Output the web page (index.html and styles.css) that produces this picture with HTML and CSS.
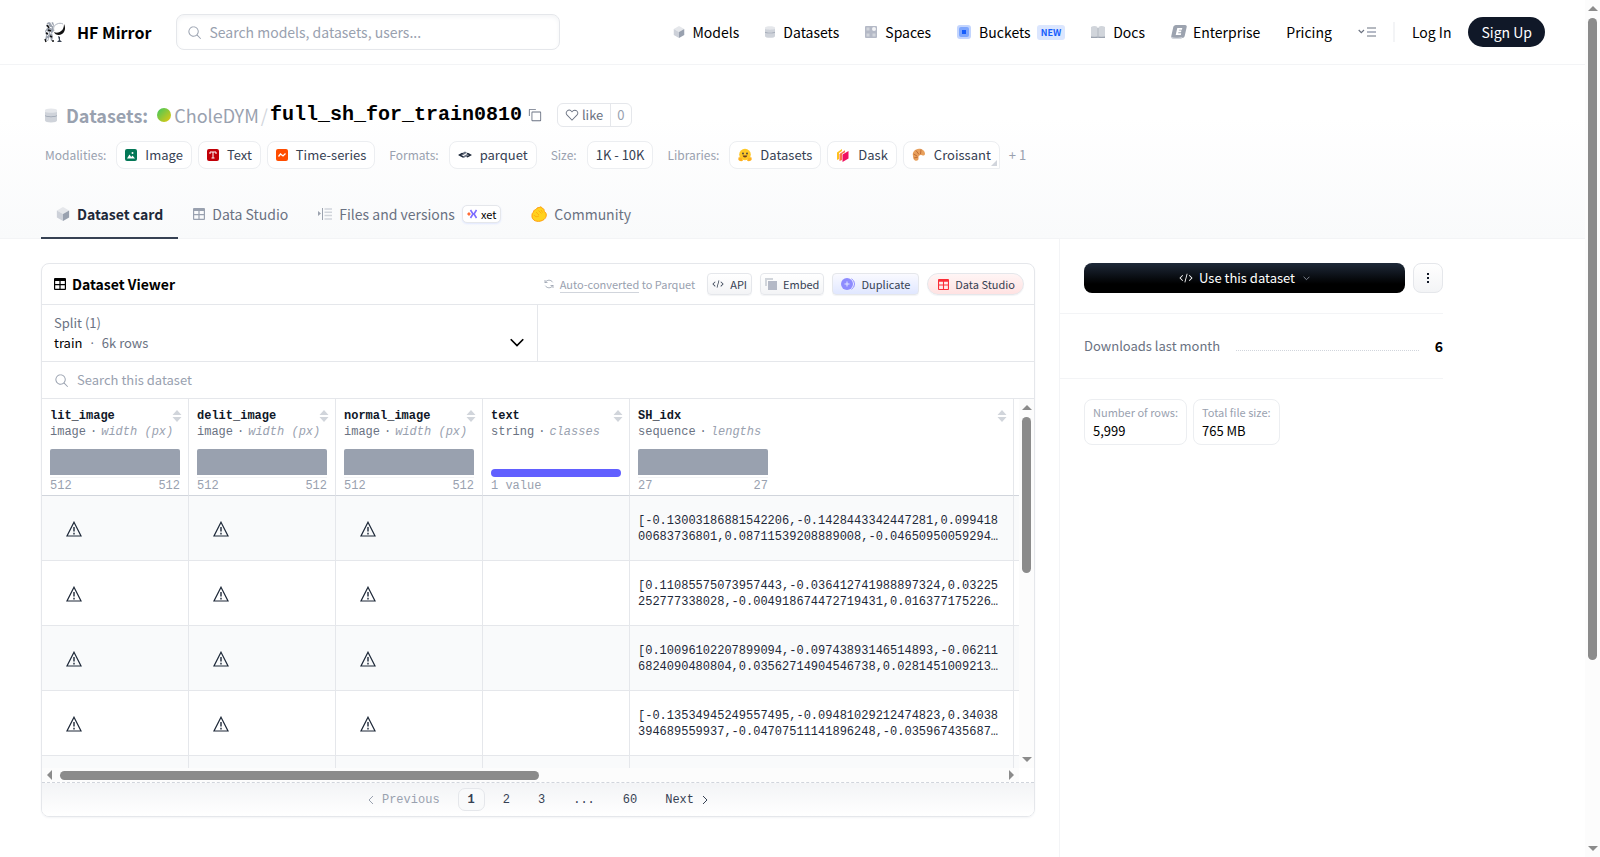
FILE: index.html
```html
<!DOCTYPE html>
<html lang="en">
<head>
    <meta charset="utf-8">
    <title>CholeDYM/full_sh_for_train0810 - Datasets at HF Mirror</title>
    <meta name="viewport" content="width=device-width, initial-scale=1">
    <link rel="stylesheet" href="styles.css">
</head>
<body>
    <!-- shared icons -->
    <svg class="sprite" aria-hidden="true">
        <symbol id="i-search" viewBox="0 0 32 32"><path d="M30 28.590L22.450 21A11 11 0 1 0 21 22.450L28.590 30zM5 14a9 9 0 1 1 9 9a9 9 0 0 1-9-9z" fill="currentColor"/></symbol>
        <symbol id="i-cube" viewBox="0 0 24 24"><path d="M12 0l10.500 6L12 12 1.500 6z" fill="#e5e7eb"/><path d="M1.500 6L12 12v12L1.500 18z" fill="#cdd1d9"/><path d="M22.500 6L12 12v12l10.500-6z" fill="#99a1af"/></symbol>
        <symbol id="i-db" viewBox="0 0 24 28"><path d="M0 5v19c0 2 5 4 12 4s12-2 12-4V5z" fill="#cfd3da"/><path d="M0 3c0-1.500 5-3 12-3s12 1.500 12 3v4c-2 2-22 2-24 0z" fill="#e5e7eb"/><path d="M0 13.500c4 3 20 3 24 0v1.500c-4 3-20 3-24 0z" fill="#99a1af"/></symbol>
        <symbol id="i-code" viewBox="0 0 32 32"><path d="M31 16l-7 7-1.410-1.410L28.170 16l-5.580-5.590L24 9zM1 16l7-7 1.410 1.410L3.830 16l5.580 5.590L8 23zM12.420 25.484L17.640 6l1.932.517L14.352 26z" fill="currentColor"/></symbol>
        <symbol id="i-table" viewBox="0 0 12 12"><path fill-rule="evenodd" d="M1 0h10a1 1 0 0 1 1 1v10a1 1 0 0 1-1 1H1a1 1 0 0 1-1-1V1a1 1 0 0 1 1-1zM1.200 3v3h4.200V3zm5.400 0v3h4.200V3zM1.200 7.200v3.600h4.200V7.200zm5.400 0v3.600h4.200V7.200z" fill="currentColor"/></symbol>
        <symbol id="i-down" viewBox="0 0 12 8"><path d="M1 1l5 5 5-5" fill="none" stroke="currentColor" stroke-width="1.400"/></symbol>
        <symbol id="i-sort" viewBox="0 0 10 12"><path d="M5 0l4.500 5h-9zM5 12l4.500-5h-9z" fill="#d1d5db"/></symbol>
        <symbol id="i-warn" viewBox="0 0 16 16"><path d="M8 1.200L15 15H1z" fill="none" stroke="currentColor" stroke-width="1.200"/><path d="M8 6v4.500M8 11.800v1.600" stroke="currentColor" stroke-width="1.400"/></symbol>
    </svg>

    <div class="window">
        <div class="page">
            <header class="topbar">
                <a class="brand" href="#">
                    <svg width="22" height="22" viewBox="0 0 22 22" aria-hidden="true">
                        <path d="M5 1l2 1 2-1 1 3-1 3 1 3-2 2 1 4-1 4H7l-1-5-2 5H1l1-6-1-4 2-3-1-3 1-2z" fill="#9ca3af"/>
                        <path d="M2 3l3 1M1 7l4-1 3 1M2 10l3 2-2 3M6 9l1 4M4 17l-2 4M7 2l2 3" stroke="#fff" stroke-width="1" fill="none"/>
                        <path d="M3 4l2 3M2 12l2 1M6 15l2 1M1 18l1 3M8 20h2M4 9l3 1" stroke="#111" stroke-width="1.400" fill="none"/>
                        <path d="M10 11c2 1 5 1 7-1 2-1 3-4 3-7 2 4 1 8-2 10-3 2-7 1-8-2z" fill="#111"/>
                        <path d="M10 10c-1-3 0-6 3-7 2-1 4-1 6 0" fill="none" stroke="#9ca3af" stroke-width=".8"/>
                        <path d="M14 15l2 1v3l2 2h-5l2-2z" fill="#374151"/>
                    </svg>
                    HF Mirror
                </a>
                <form class="site-search">
                    <svg class="ico-15"><use href="#i-search"/></svg>
                    <input type="search" aria-label="Search models, datasets, users" placeholder="Search models, datasets, users...">
                </form>
                <nav class="nav">
                    <a href="#"><svg class="ico-12"><use href="#i-cube"/></svg>Models</a>
                    <a href="#"><svg class="ico-db"><use href="#i-db"/></svg>Datasets</a>
                    <a href="#">
                        <svg width="12" height="12" viewBox="0 0 12 12"><rect width="12" height="12" rx="1" fill="#b4b9c6"/><path d="M1.500 1.500h3v3h-3zM1.500 7.500h3v3h-3zM7.500 7.500h3v3h-3z" fill="#d1d5db"/><circle cx="9" cy="3" r="2" fill="#f3f4f6"/></svg>
                        Spaces
                    </a>
                    <a href="#">
                        <svg width="14" height="14" viewBox="0 0 14 14"><rect width="14" height="14" rx="3" fill="#c3d5fe"/><rect x="2" y="2" width="10" height="10" rx="2" fill="#7ea6fd"/><rect x="5" y="5" width="4" height="4" fill="#155dfc"/></svg>
                        Buckets <span class="new">NEW</span>
                    </a>
                    <a href="#">
                        <svg width="14" height="12" viewBox="0 0 14 12"><path d="M0 1c2-1.300 5-1.300 6.500 0v10C5 10 2 10 0 11zM7.500 1C9 -.3 12-.3 14 1v10c-2-1-5-1-6.500 0z" fill="#d1d5db"/><path d="M0 10.500h6l1 1 1-1h6V12H0zM6.500 2h1v9h-1z" fill="#9ca3af"/></svg>
                        Docs
                    </a>
                    <a href="#" class="enterprise">
                        <svg width="16" height="14" viewBox="0 0 16 14"><path d="M5 0h9c1.500 0 2 1 1.700 2l-2 9c-.3 1-1.200 2-2.700 2H2C.5 13 0 12 .3 11l2-9C2.600 1 3.500 0 5 0z" fill="#9ca3af"/><path d="M.4 12c3 1.300 8 .8 11 0l-1 2H2C1 14 .4 13 .4 12z" fill="#d1d5db"/><path d="M6.300 3h5l-.4 1.700H8l-.2.900h2.600l-.4 1.600H7.400L7.200 8.300h3L9.800 10H4.700z" fill="#fff"/></svg>
                        Enterprise
                    </a>
                    <a href="#">Pricing</a>
                    <button class="more-nav" aria-label="More">
                        <svg width="18" height="10" viewBox="0 0 18 10"><path d="M.7 3l2.600 2.600L6 3" fill="none" stroke="#6b7280" stroke-width="1.200"/><path d="M9 1h9M9 9h9" stroke="#6b7280"/><path d="M9 5h9" stroke="#b4b9c6" stroke-width="2"/></svg>
                    </button>
                </nav>
                <div class="account">
                    <a href="#">Log In</a>
                    <a href="#" class="signup">Sign Up</a>
                </div>
            </header>

            <section class="hero">
                <h1 class="repo">
                    <svg class="ico-repo"><use href="#i-db"/></svg>
                    <a href="#" class="kind">Datasets:</a>
                    <span class="avatar"></span>
                    <a href="#" class="owner">CholeDYM</a><span class="slash">/</span><a href="#" class="name">full_sh_for_train0810</a>
                    <button class="copy" aria-label="Copy dataset name">
                        <svg width="14" height="14" viewBox="0 0 32 32"><path d="M28 10v18H10V10h18m0-2H10a2 2 0 0 0-2 2v18a2 2 0 0 0 2 2h18a2 2 0 0 0 2-2V10a2 2 0 0 0-2-2zM4 18H2V4a2 2 0 0 1 2-2h14v2H4z" fill="currentColor"/></svg>
                    </button>
                    <span class="likes">
                        <button><svg width="14" height="14" viewBox="0 0 32 32"><path d="M22.450 6a5.470 5.470 0 0 1 3.910 1.640 5.700 5.700 0 0 1 0 8L16 26.130 5.640 15.640a5.700 5.700 0 0 1 0-8 5.480 5.480 0 0 1 7.820 0L16 10.240l2.530-2.580A5.440 5.440 0 0 1 22.450 6m0-2a7.470 7.470 0 0 0-5.340 2.240L16 7.360l-1.110-1.120a7.490 7.490 0 0 0-10.680 0 7.720 7.720 0 0 0 0 10.820L16 29l11.790-11.940a7.720 7.720 0 0 0 0-10.820A7.490 7.490 0 0 0 22.450 4z" fill="currentColor"/></svg>like</button>
                        <button class="count">0</button>
                    </span>
                </h1>

                <div class="tags">
                    <div class="tag-group">
                        <span class="tag-label">Modalities:</span>
                        <a class="tag" href="#"><svg width="12" height="12" viewBox="0 0 12 12"><rect width="12" height="12" rx="2" fill="#047857"/><path d="M2 9.500l2.500-4 1.700 2.500L7.500 6.500 10 9.500z" fill="#fff"/><circle cx="7.500" cy="4" r="1" fill="#fff"/></svg>Image</a>
                        <a class="tag" href="#"><svg width="12" height="12" viewBox="0 0 12 12"><rect width="12" height="12" rx="2" fill="#c10007"/><path d="M3 5V3h6v2M6 3v6M4.500 9h3" fill="none" stroke="#fff"/></svg>Text</a>
                        <a class="tag" href="#"><svg width="12" height="12" viewBox="0 0 12 12"><rect width="12" height="12" rx="2" fill="#ff4d00"/><path d="M2.500 7.500L4.500 5l2.500 2 2.500-2.500" fill="none" stroke="#fff" stroke-width="1.300"/></svg>Time-series</a>
                    </div>
                    <div class="tag-group">
                        <span class="tag-label">Formats:</span>
                        <a class="tag" href="#"><svg width="14" height="10" viewBox="0 0 14 10"><path d="M1 5l6-3.500L9 2.700 3 6.200zM4 7l6.500-3.700L12 4.200 5.600 8z" fill="#6a7282"/><path d="M0 5l4-2.300 1.500.8L2.800 5l3 1.600L4.500 7.500zM14 5l-4.500 2.500-1.500-.8L11 5 8.500 3.600 9.700 2.700z" fill="#1e2939"/></svg>parquet</a>
                    </div>
                    <div class="tag-group">
                        <span class="tag-label">Size:</span>
                        <a class="tag plain" href="#">1K - 10K</a>
                    </div>
                    <div class="tag-group">
                        <span class="tag-label">Libraries:</span>
                        <a class="tag" href="#"><svg width="14" height="14" viewBox="0 0 14 14"><circle cx="7" cy="6.500" r="5.800" fill="#ffc825"/><path d="M.5 9.500c1.500-.8 4 .7 4.500 3C3.500 14 1 13 .3 11.500zM13.500 9.500c-1.500-.8-4 .7-4.500 3 1.500 1.500 4 .5 4.700-1z" fill="#ffb01e"/><circle cx="5" cy="5.500" r=".9" fill="#3a3b45"/><circle cx="9" cy="5.500" r=".9" fill="#3a3b45"/><path d="M4.700 7.500h4.600C9 10 5 10 4.700 7.500z" fill="#6b3b1d"/></svg>Datasets</a>
                        <a class="tag" href="#"><svg width="14" height="14" viewBox="0 0 14 14"><path d="M1 4.500L6 1v2L3 5v6l-2 1z" fill="#ffc11e"/><path d="M3.500 6L9 2.200v2L6 6v6l-2.500 1z" fill="#f9734b"/><path d="M6.500 6.500L12.500 3v7.500l-6 3.500z" fill="#ef1161"/></svg>Dask</a>
                        <a class="tag last" href="#"><svg width="14" height="14" viewBox="0 0 14 14"><path d="M1 8C0 4 3 1 7 .8c3 0 6 2 6 5 0 1.700-1.500 2.200-3 1.500-2-1-4 .7-3.500 2.700.5 2-1.500 3.500-3.500 2.500S1 9 1 8z" fill="#e8a05c"/><path d="M1.500 6l3.500 2M4 2.500L7 6.500M9 1.500L8.500 6M2 10l4-1" stroke="#b5602c" stroke-width=".8"/></svg>Croissant</a>
                        <button class="more-tags">+ 1</button>
                    </div>
                </div>

                <nav class="tabs">
                    <a href="#" class="active"><svg class="ico-14"><use href="#i-cube"/></svg>Dataset card</a>
                    <a href="#"><svg class="ico-12 gray"><use href="#i-table"/></svg>Data Studio</a>
                    <a href="#">
                        <svg width="14" height="12" viewBox="0 0 14 12"><path d="M0 3l3 2.500L0 8z" fill="#9ca3af"/><path d="M4.500 0v12" stroke="#9ca3af"/><path d="M6.500 1H14M6.500 4.300H14M6.500 7.600H14M6.500 11H14" stroke="#d1d5db" stroke-width="1.500"/></svg>
                        Files and versions
                        <span class="xet"><svg width="10" height="10" viewBox="0 0 10 10"><path d="M3.500 1L6 5 3.500 9M9.500 1L7 5l2.500 4" fill="none" stroke="#7c6cff" stroke-width="1.600"/><path d="M0 5l2-2 1.800 2L2 7z" fill="#ff6b35"/></svg>xet</span>
                    </a>
                    <a href="#">
                        <svg width="16" height="16" viewBox="0 0 16 16"><path d="M1 9c0-2 1-2 1.500-3C3 3 5 4 5.500 3 6 1 8 2 9 1.200c1-1 2 .3 2.300 1.300 2 0 1.700 1.500 2 3C16 7 16 11 13 13.500 9 16.500 2 16 1 11z" fill="#ffd21e" stroke="#ff9d0b"/><path d="M5 6l3 3M7.500 4.500l3 3M10 4l1.500 2.500M3 9c1 2 3 2 5 1" stroke="#ff9d0b" stroke-width=".7" fill="none"/></svg>
                        Community
                    </a>
                </nav>
            </section>

            <div class="content">
                <main>
                    <section class="viewer">
                        <div class="viewer-head">
                            <h2><svg class="ico-12"><use href="#i-table"/></svg>Dataset Viewer</h2>
                            <span class="converted">
                                <svg width="10" height="10" viewBox="0 0 10 10"><path d="M1 4V1M1 3.500h2.500M1.300 3.300C3 .5 7 .5 8.700 3.300M9 6v3M9 6.500H6.500M8.700 6.700C7 9.500 3 9.500 1.300 6.700" fill="none" stroke="currentColor" stroke-width=".8"/></svg>
                                <span><a href="#">Auto-converted</a> to Parquet</span>
                            </span>
                            <button class="chip"><svg class="ico-12"><use href="#i-code"/></svg>API</button>
                            <button class="chip embed"><svg width="12" height="12" viewBox="0 0 12 12"><path d="M0 0h8v2H2v6H0z" fill="#d1d5db"/><path d="M3 3h9v9H3z" fill="#b4b9c6"/></svg>Embed</button>
                            <button class="chip duplicate"><svg width="14" height="12" viewBox="0 0 14 12"><circle cx="6" cy="6" r="6" fill="#8e8cff"/><path d="M6 3.500v5M3.500 6h5" stroke="#e0e7ff"/><path d="M10.500.8a6 6 0 0 1 0 10.400" fill="none" stroke="#8e8cff"/></svg>Duplicate</button>
                            <a class="chip studio" href="#"><svg class="ico-studio"><use href="#i-table"/></svg>Data Studio</a>
                        </div>
                        <div class="viewer-split">
                            <button class="split">
                                <span class="split-label">Split (1)</span>
                                <span><b>train</b><i>·</i>6k rows</span>
                                <svg width="16" height="10"><use href="#i-down"/></svg>
                            </button>
                        </div>
                        <label class="viewer-search">
                            <svg class="ico-15"><use href="#i-search"/></svg>
                            <input type="search" aria-label="Search this dataset" placeholder="Search this dataset">
                        </label>

                        <div class="grid-wrap">
                            <div class="grid-scroll">
                                <table>
                                    <colgroup><col><col><col><col><col class="wide"><col></colgroup>
                                    <thead>
                                        <tr>
                                            <th><div class="col-name">lit_image<svg><use href="#i-sort"/></svg></div><div class="col-type">image<i>·</i><em>width (px)</em></div><div class="histo"></div><div class="range"><span>512</span><span>512</span></div></th>
                                            <th><div class="col-name">delit_image<svg><use href="#i-sort"/></svg></div><div class="col-type">image<i>·</i><em>width (px)</em></div><div class="histo"></div><div class="range"><span>512</span><span>512</span></div></th>
                                            <th><div class="col-name">normal_image<svg><use href="#i-sort"/></svg></div><div class="col-type">image<i>·</i><em>width (px)</em></div><div class="histo"></div><div class="range"><span>512</span><span>512</span></div></th>
                                            <th><div class="col-name">text<svg><use href="#i-sort"/></svg></div><div class="col-type">string<i>·</i><em>classes</em></div><div class="histo classes"></div><div class="range"><span>1 value</span></div></th>
                                            <th><div class="col-name">SH_idx<svg><use href="#i-sort"/></svg></div><div class="col-type">sequence<i>·</i><em>lengths</em></div><div class="histo"></div><div class="range"><span>27</span><span>27</span></div></th>
                                            <th></th>
                                        </tr>
                                    </thead>
                                    <tbody>
                                        <tr>
                                            <td><svg><use href="#i-warn"/></svg></td><td><svg><use href="#i-warn"/></svg></td><td><svg><use href="#i-warn"/></svg></td><td></td>
                                            <td>[-0.13003186881542206,-0.1428443342447281,0.09941800683736801,0.08711539208889008,-0.04650950059294…</td><td></td>
                                        </tr>
                                        <tr>
                                            <td><svg><use href="#i-warn"/></svg></td><td><svg><use href="#i-warn"/></svg></td><td><svg><use href="#i-warn"/></svg></td><td></td>
                                            <td>[0.11085575073957443,-0.036412741988897324,0.03225252777338028,-0.004918674472719431,0.016377175226…</td><td></td>
                                        </tr>
                                        <tr>
                                            <td><svg><use href="#i-warn"/></svg></td><td><svg><use href="#i-warn"/></svg></td><td><svg><use href="#i-warn"/></svg></td><td></td>
                                            <td>[0.10096102207899094,-0.09743893146514893,-0.062116824090480804,0.03562714904546738,0.0281451009213…</td><td></td>
                                        </tr>
                                        <tr>
                                            <td><svg><use href="#i-warn"/></svg></td><td><svg><use href="#i-warn"/></svg></td><td><svg><use href="#i-warn"/></svg></td><td></td>
                                            <td>[-0.13534945249557495,-0.09481029212474823,0.34038394689559937,-0.04707511141896248,-0.035967435687…</td><td></td>
                                        </tr>
                                        <tr><td></td><td></td><td></td><td></td><td></td><td></td></tr>
                                    </tbody>
                                </table>
                            </div>
                            <div class="bar bar-y"><span class="arrow up"></span><span class="thumb"></span><span class="arrow down"></span></div>
                            <div class="bar bar-x"><span class="arrow left"></span><span class="thumb"></span><span class="arrow right"></span></div>
                        </div>

                        <nav class="pager">
                            <a href="#" class="prev"><svg width="6" height="10" viewBox="0 0 6 10"><path d="M5 1L1 5l4 4" fill="none" stroke="currentColor"/></svg>Previous</a>
                            <a href="#" class="current">1</a>
                            <a href="#">2</a>
                            <a href="#">3</a>
                            <a href="#">...</a>
                            <a href="#">60</a>
                            <a href="#" class="next">Next<svg width="6" height="10" viewBox="0 0 6 10"><path d="M1 1l4 4-4 4" fill="none" stroke="currentColor"/></svg></a>
                        </nav>
                    </section>
                </main>

                <aside>
                    <div class="actions">
                        <button class="use"><svg class="ico-14"><use href="#i-code"/></svg>Use this dataset<svg class="caret"><use href="#i-down"/></svg></button>
                        <button class="dots" aria-label="More options"><svg width="2" height="10" viewBox="0 0 2 10"><path d="M0 0h2v2H0zM0 4h2v2H0zM0 8h2v2H0z" fill="#111827"/></svg></button>
                    </div>
                    <dl class="downloads"><dt>Downloads last month</dt><dd>6</dd></dl>
                    <div class="stats">
                        <a href="#"><span>Number of rows:</span>5,999</a>
                        <a href="#"><span>Total file size:</span>765 MB</a>
                    </div>
                </aside>
            </div>
        </div>
        <div class="bar bar-page"><span class="arrow up"></span><span class="thumb"></span><span class="arrow down"></span></div>
    </div>
</body>
</html>
```

FILE: styles.css
```css
:root {
    --sans: "Noto Sans CJK SC", "Open Sans", sans-serif;
    --mono: "Liberation Mono", monospace;
    --line: #e5e7eb;
    --line-soft: #f3f4f6;
    --gray-400: #99a1af;
    --gray-500: #6a7282;
    --gray-700: #364153;
    --gray-900: #101828;
    --thumb: #8b8b8b;
}
* {
    box-sizing: border-box;
}
body {
    margin: 0;
    font-family: var(--sans);
    font-size: 14px;
    line-height: 20px;
    color: #000;
    background: #fff;
}
a {
    color: inherit;
    text-decoration: none;
}
button, input {
    font: inherit;
    color: inherit;
    background: none;
    border: none;
    padding: 0;
    margin: 0;
}
button {
    cursor: pointer;
}
input:focus {
    outline: none;
}
input::placeholder {
    color: var(--gray-400);
    opacity: 1;
}
h1, h2, dl, dd {
    margin: 0;
}
svg {
    flex: none;
    display: block;
}
.sprite {
    position: absolute;
    width: 0;
    height: 0;
}
.ico-12 { width: 12px; height: 12px; }
.ico-14 { width: 14px; height: 14px; }
.ico-15 { width: 15px; height: 15px; }
.ico-db { width: 10px; height: 12px; }
.ico-repo { width: 12px; height: 15px; }
.ico-studio { width: 11px; height: 11px; color: #fb2c36; }
.gray { color: var(--gray-400); }

.window {
    display: grid;
    grid-template-columns: minmax(0, 1fr) 15px;
    height: 100vh;
}
.page {
    display: flex;
    flex-direction: column;
    overflow: hidden;
}

/* top navigation */
.topbar {
    display: flex;
    align-items: center;
    flex: none;
    height: 65px;
    padding: 0 40px 0 44px;
    border-bottom: 1px solid var(--line-soft);
}
.brand {
    display: flex;
    align-items: center;
    gap: 11px;
    font-size: 16px;
    font-weight: 700;
    margin-right: 25px;
}
.site-search {
    display: flex;
    align-items: center;
    gap: 7px;
    width: 384px;
    height: 36px;
    padding: 0 10px;
    border: 1px solid var(--line);
    border-radius: 8px;
    color: var(--gray-400);
    box-shadow: inset 0 2px 4px #f3f4f6;
}
.site-search input {
    flex: 1;
    color: #000;
}
.nav {
    display: flex;
    align-items: center;
    gap: 26px;
    margin-left: auto;
}
.nav a {
    display: flex;
    align-items: center;
    gap: 8px;
}
.nav .enterprise {
    gap: 6px;
}
.new {
    padding: 0 4px;
    margin-left: -2px;
    font-size: 9px;
    font-weight: 700;
    line-height: 15px;
    color: #155dfc;
    background: #dbe6fe;
    border-radius: 3px;
}
.account {
    display: flex;
    align-items: center;
    gap: 17px;
    margin-left: 17px;
}
.account::before {
    content: "";
    width: 2px;
    height: 20px;
    background: var(--line-soft);
}
.signup {
    padding: 5px 13px;
    color: #fff;
    background: var(--gray-900);
    border-radius: 15px;
}

/* repository header */
.hero {
    flex: none;
    padding: 36px 41px 0;
    background: linear-gradient(#fff 30%, #f9fafb);
    border-bottom: 1px solid var(--line-soft);
}
.repo {
    display: flex;
    align-items: center;
    height: 28px;
    padding-left: 4px;
    font-size: 18px;
    font-weight: 400;
    color: var(--gray-400);
}
.kind {
    font-weight: 700;
    margin: 0 9px;
}
.avatar {
    width: 14px;
    height: 14px;
    margin-right: 3px;
    border-radius: 50%;
    background: linear-gradient(135deg, #3cc860, #e8c80c);
}
.slash {
    margin: 0 2px;
    color: #d1d5dc;
}
.name {
    font-family: var(--mono);
    font-size: 20px;
    font-weight: 700;
    color: #000;
}
.copy {
    margin: 0 15px 0 6px;
    color: var(--gray-500);
}
.likes {
    display: flex;
    height: 24px;
    font-size: 13px;
    color: var(--gray-500);
    border: 1px solid var(--line);
    border-radius: 6px;
    background: #fff;
}
.likes button {
    display: flex;
    align-items: center;
    gap: 3px;
    padding: 0 7px;
}
.likes .count {
    color: var(--gray-400);
    padding: 0 6px;
    border-left: 1px solid var(--line);
}
.tags {
    display: flex;
    gap: 14px;
    margin-top: 12px;
    padding-left: 4px;
    font-size: 13px;
}
.tag-group {
    display: flex;
    align-items: center;
    gap: 6px;
}
.tag-label {
    color: var(--gray-400);
    font-size: 12px;
    margin-right: 4px;
}
.tag {
    display: flex;
    align-items: center;
    gap: 8px;
    height: 28px;
    padding: 0 8px;
    color: var(--gray-700);
    background: #fff;
    border: 1px solid #eceef1;
    border-radius: 8px;
}
.tag.last {
    position: relative;
    border-bottom-right-radius: 0;
}
.tag.last::after {
    content: "";
    position: absolute;
    right: 2px;
    bottom: 2px;
    border: 3px solid #d1d5dc;
    border-top-color: transparent;
    border-left-color: transparent;
}
.more-tags {
    color: var(--gray-400);
    margin-left: 3px;
}
.tabs {
    display: flex;
    margin-top: 22px;
    font-size: 14px;
    color: var(--gray-500);
}
.tabs a {
    display: flex;
    align-items: center;
    gap: 7px;
    height: 48px;
    padding: 0 15px;
    border-bottom: 2px solid transparent;
    margin-bottom: -1px;
}
.tabs .active {
    font-weight: 700;
    color: #1e2939;
    border-color: #364153;
}
.xet {
    display: flex;
    align-items: center;
    gap: 4px;
    height: 18px;
    padding: 0 4px;
    font-size: 11px;
    color: #000;
    background: #fff;
    border: 1px solid var(--line);
    border-radius: 5px;
    box-shadow: 0 1px 2px #e0e7ff;
}

/* main columns */
.content {
    flex: 1;
    display: grid;
    grid-template-columns: minmax(0, 1fr) 384px;
    gap: 24px;
    max-width: 1443px;
    padding-left: 41px;
}
main {
    padding-top: 24px;
}
.viewer {
    border: 1px solid var(--line);
    border-radius: 8px;
    box-shadow: 0 1px 2px #f3f4f6;
    overflow: hidden;
}
.viewer-head {
    display: flex;
    align-items: center;
    gap: 8px;
    height: 41px;
    padding: 0 10px 0 12px;
    border-bottom: 1px solid var(--line);
}
h2 {
    display: flex;
    align-items: center;
    gap: 6px;
    font-size: 14px;
    font-weight: 700;
    margin-right: auto;
}
.converted {
    display: flex;
    align-items: center;
    gap: 6px;
    margin-right: 4px;
    font-size: 11px;
    line-height: 16px;
    color: var(--gray-400);
}
.converted a {
    border-bottom: 1px solid #d1d5dc;
}
.chip {
    display: flex;
    align-items: center;
    gap: 6px;
    height: 22px;
    padding: 0 4px;
    font-size: 11px;
    color: var(--gray-700);
    border: 1px solid var(--line);
    border-radius: 4px;
    background: linear-gradient(#fff, #f3f4f6);
    box-shadow: 0 1px 1px #f3f4f6;
}
.duplicate {
    padding: 0 8px;
    background: linear-gradient(#fafaff, #e0e7ff);
}
.studio {
    padding: 0 8px 0 10px;
    border-radius: 11px;
    background: linear-gradient(#fff5f5, #ffe2e2);
}
.viewer-split {
    height: 57px;
    border-bottom: 1px solid var(--line);
}
.split {
    display: grid;
    grid-template-columns: 1fr auto;
    align-content: center;
    width: 50%;
    height: 100%;
    padding: 0 12px;
    font-size: 13px;
    text-align: left;
    color: var(--gray-500);
    border-right: 1px solid var(--line);
}
.split-label {
    grid-column: 1 / -1;
}
.split b {
    font-weight: 400;
    color: #000;
}
.split i {
    margin: 0 8px;
    font-family: "Open Sans", sans-serif;
    font-style: normal;
    line-height: 1;
}
.split svg {
    align-self: center;
    color: #000;
}
.viewer-search {
    display: flex;
    align-items: center;
    gap: 8px;
    height: 37px;
    padding: 0 12px;
    color: var(--gray-400);
    border-bottom: 1px solid var(--line);
}
.viewer-search input {
    flex: 1;
    font-size: 13px;
}

/* data grid */
.grid-wrap {
    display: grid;
    grid-template-columns: minmax(0, 1fr) 15px;
    font-family: var(--mono);
    font-size: 12px;
    line-height: 16px;
}
.grid-scroll {
    height: 369px;
    overflow: hidden;
}
table {
    width: 1119px;
    table-layout: fixed;
    border-collapse: separate;
    border-spacing: 0;
}
col {
    width: 147px;
}
.wide {
    width: 384px;
}
th, td {
    padding: 0 8px;
    text-align: left;
    border-right: 1px solid var(--line);
    border-bottom: 1px solid var(--line);
}
th {
    height: 97px;
    padding-top: 9px;
    vertical-align: top;
    font-weight: 400;
    border-bottom-color: #d1d5dc;
}
td {
    height: 65px;
    padding-top: 2px;
    color: #1e2939;
    overflow-wrap: anywhere;
}
tbody tr:nth-child(odd) {
    background: #f9fafb;
}
td svg {
    width: 16px;
    height: 16px;
    margin-left: 16px;
}
.col-name {
    display: flex;
    align-items: center;
    justify-content: space-between;
    font-weight: 700;
    color: var(--gray-900);
}
.col-name svg {
    width: 10px;
    height: 12px;
    margin-right: -2px;
}
.col-type {
    color: var(--gray-500);
    white-space: nowrap;
}
.col-type i {
    margin: 0 4px;
    font-style: normal;
}
.col-type em {
    color: var(--gray-400);
}
.histo {
    width: 130px;
    height: 26px;
    margin-top: 9px;
    background: #99a1af;
    border-radius: 2px 2px 0 0;
}
.histo.classes {
    height: 8px;
    margin-top: 29px;
    margin-bottom: -2px;
    border-radius: 4px;
    background: #615fff;
}
.range {
    display: flex;
    justify-content: space-between;
    width: 130px;
    margin-top: 2px;
    border-top: 1px solid var(--line-soft);
    color: var(--gray-400);
}
.histo.classes + .range {
    border-color: transparent;
}

/* scroll bars */
.bar {
    display: flex;
    align-items: center;
    background: #fcfcfc;
}
.bar-y, .bar-page {
    flex-direction: column;
    padding: 6px 0;
    gap: 7px;
}
.bar-x {
    height: 14px;
    padding: 0 5px;
    gap: 8px;
}
.thumb {
    background: var(--thumb);
    border-radius: 5px;
}
.bar-y .thumb, .bar-page .thumb {
    width: 9px;
}
.bar-y .thumb {
    height: 156px;
}
.bar-page .thumb {
    height: 76%;
}
.bar-x .thumb {
    width: 49.5%;
    height: 9px;
}
.arrow {
    border: 5px solid transparent;
}
.up { border-top: none; border-bottom-color: var(--thumb); }
.down { border-bottom: none; border-top-color: var(--thumb); margin-top: auto; }
.left { border-left: none; border-right-color: var(--thumb); }
.right { border-right: none; border-left-color: var(--thumb); margin-left: auto; }

.pager {
    display: flex;
    align-items: center;
    justify-content: center;
    gap: 8px;
    height: 34px;
    font-family: var(--mono);
    font-size: 12px;
    color: var(--gray-700);
    border-top: 1px dashed #d1d5dc;
    background: linear-gradient(#f3f4f6, #fff);
}
.pager a {
    display: flex;
    align-items: center;
    padding: 1px 9px 0;
    height: 23px;
    border: 1px solid transparent;
    border-radius: 7px;
}
.pager .prev {
    gap: 8px;
    color: var(--gray-400);
}
.pager .next {
    gap: 8px;
}
.pager .current {
    font-weight: 700;
    border-color: var(--line);
    background: #f9fafb;
}

/* sidebar */
aside {
    border-left: 1px solid var(--line-soft);
}
.actions {
    display: flex;
    gap: 8px;
    padding: 24px 0 20px 24px;
    border-bottom: 1px solid var(--line-soft);
}
.use {
    flex: 1;
    display: flex;
    align-items: center;
    justify-content: center;
    gap: 6px;
    height: 30px;
    font-size: 13px;
    color: #fff;
    border-radius: 8px;
    background: linear-gradient(#1e2939, #000 70%);
}
.caret {
    width: 7px;
    height: 5px;
    margin-left: 2px;
    color: var(--gray-400);
}
.dots {
    display: flex;
    align-items: center;
    justify-content: center;
    width: 30px;
    border: 1px solid var(--line);
    border-radius: 8px;
    background: linear-gradient(#fff, #f3f4f6);
}
.downloads {
    display: flex;
    align-items: center;
    gap: 16px;
    height: 65px;
    padding: 0 0 0 24px;
    font-size: 13px;
    color: var(--gray-500);
    border-bottom: 1px solid var(--line-soft);
}
.downloads::before {
    content: "";
    order: 1;
    flex: 1;
    margin-top: 8px;
    border-bottom: 1px dotted #d1d5dc;
}
.downloads dd {
    order: 2;
    font-size: 14px;
    font-weight: 700;
    color: #000;
}
.stats {
    display: flex;
    gap: 6px;
    padding: 20px 0 0 24px;
}
.stats a {
    padding: 3px 8px;
    font-size: 13px;
    border: 1px solid #eceef1;
    border-radius: 8px;
}
.stats span {
    display: block;
    font-size: 11px;
    line-height: 18px;
    color: var(--gray-400);
}
```
